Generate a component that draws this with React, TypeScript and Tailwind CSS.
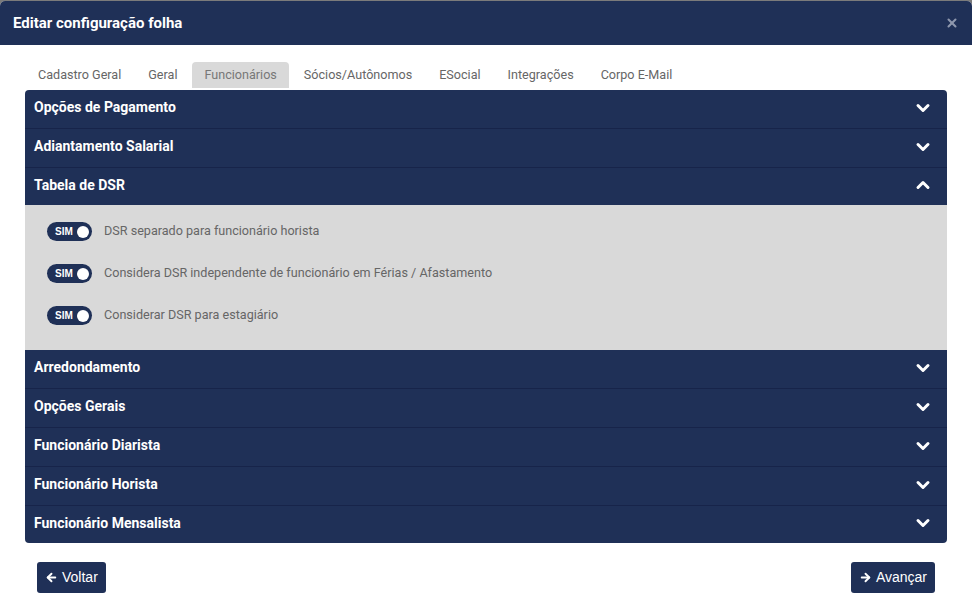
import React, { useState } from 'react'
import { ChevronDown, ChevronUp, ArrowLeft, ArrowRight, X } from 'lucide-react'

const tabs = ['Cadastro Geral', 'Geral', 'Funcionários', 'Sócios/Autônomos', 'ESocial', 'Integrações', 'Corpo E-Mail']

const sections = [
  'Opções de Pagamento',
  'Adiantamento Salarial',
  'Tabela de DSR',
  'Arredondamento',
  'Opções Gerais',
  'Funcionário Diarista',
  'Funcionário Horista',
  'Funcionário Mensalista',
]

const dsrOptions = [
  'DSR separado para funcionário horista',
  'Considera DSR independente de funcionário em Férias / Afastamento',
  'Considerar DSR para estagiário',
]

function Toggle() {
  return (
    <div className="flex items-center justify-between w-[45px] h-[19px] rounded-full bg-[#1f3057] pl-[8px] pr-[3px] shrink-0">
      <span className="text-[10px] font-bold text-white leading-none" style={{ fontFamily: '"Liberation Sans", Arial, sans-serif' }}>SIM</span>
      <span className="w-[12px] h-[12px] rounded-full bg-white" />
    </div>
  )
}

export default function App() {
  const [open, setOpen] = useState('Tabela de DSR')

  return (
    <div className="h-[603px] w-[972px] bg-[#7b7b7b] pt-px" style={{ fontFamily: 'Roboto, "Noto Sans", sans-serif' }}>
      <div className="h-[602px] bg-white rounded-t-[5px] overflow-hidden flex flex-col">
        {/* Header */}
        <div className="h-[44px] bg-[#1f3057] flex items-center justify-between pl-[13px] pr-[13px] shrink-0">
          <h1 className="text-[15px] font-bold text-white">Editar configuração folha</h1>
          <X size={14} strokeWidth={3.5} className="text-[#8e97ad]" />
        </div>

        {/* Tabs */}
        <div className="flex gap-[3px] ml-[26px] mt-[17px]">
          {tabs.map((t) => (
            <div
              key={t}
              className={
                t === 'Funcionários'
                  ? 'h-[26px] px-[12px] flex items-center text-[12.6px] text-[#777] bg-[#d9d9d9] rounded-t-[4px]'
                  : 'h-[26px] px-[12px] flex items-center text-[12.6px] text-[#666]'
              }
            >
              {t}
            </div>
          ))}
        </div>

        {/* Accordion */}
        <div className="mx-[25px] mt-[2px] rounded-[4px] overflow-hidden bg-[#1f3057]">
          {sections.map((s, i) => {
            const isOpen = open === s
            const isLast = i === sections.length - 1
            return (
              <div key={s}>
                <button
                  type="button"
                  onClick={() => setOpen(isOpen ? '' : s)}
                  className={
                    'w-full flex items-center justify-between pl-[9px] pr-[14px] pb-[3px] text-left ' +
                    (isOpen || isLast ? 'h-[37px]' : 'h-[39px] border-b border-[#17244a]')
                  }
                >
                  <span className="text-[14px] font-bold text-white">{s}</span>
                  {isOpen ? (
                    <ChevronUp size={20} strokeWidth={3.6} className="text-white" />
                  ) : (
                    <ChevronDown size={20} strokeWidth={3.6} className="text-white" />
                  )}
                </button>
                {isOpen && s === 'Tabela de DSR' && (
                  <div className="bg-[#d9d9d9] pt-[17px] pb-[25px] pl-[22px] flex flex-col gap-[23px]">
                    {dsrOptions.map((o) => (
                      <div key={o} className="h-[19px] flex items-center gap-[12px]">
                        <Toggle />
                        <span className="text-[12.6px] text-[#666]">{o}</span>
                      </div>
                    ))}
                  </div>
                )}
              </div>
            )
          })}
        </div>

        {/* Footer */}
        <div className="flex justify-between px-[37px] mt-[19px]" style={{ fontFamily: '"Liberation Sans", Arial, sans-serif' }}>
          <button type="button" className="h-[31px] px-[8px] flex items-center gap-[4px] rounded-[3px] bg-[#1f3057] text-white text-[14px]">
            <ArrowLeft size={13} strokeWidth={3.5} />
            Voltar
          </button>
          <button type="button" className="h-[31px] px-[8px] flex items-center gap-[4px] rounded-[3px] bg-[#1f3057] text-white text-[14px]">
            <ArrowRight size={13} strokeWidth={3.5} />
            Avançar
          </button>
        </div>
      </div>
    </div>
  )
}
